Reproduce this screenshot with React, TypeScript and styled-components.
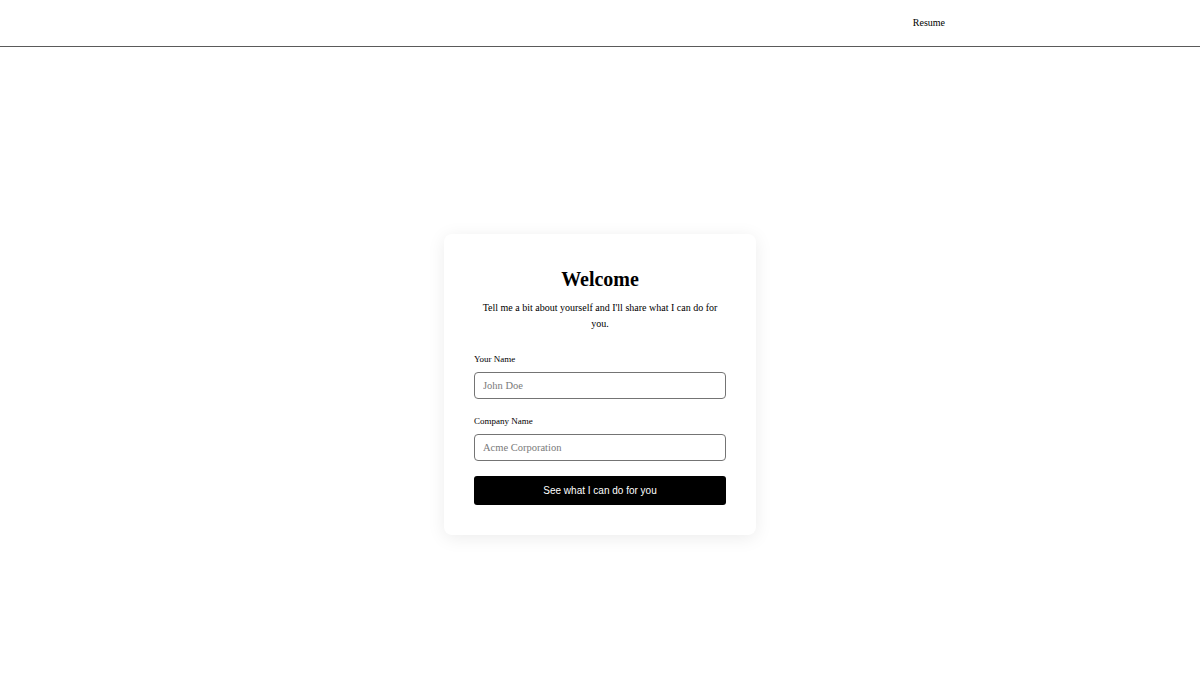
import React from "react";
import styled, { createGlobalStyle } from "styled-components";

const GlobalStyle = createGlobalStyle`
  * {
    box-sizing: border-box;
  }

  body {
    margin: 0;
    background: #ffffff;
    color: #000000;
    font-family: "Liberation Serif", "Times New Roman", serif;
  }
`;

const Header = styled.header`
  height: 47px;
  display: flex;
  align-items: center;
  justify-content: flex-end;
  padding: 0 255px 1px 0;
  border-bottom: 1px solid #5a5a5a;
`;

const NavLink = styled.a`
  font-size: 10px;
  color: #000000;
  text-decoration: none;
  cursor: pointer;
`;

const Main = styled.main`
  min-height: 100vh;
  display: flex;
  align-items: center;
  justify-content: center;
`;

const Card = styled.div`
  width: 312px;
  padding: 30px;
  background: #ffffff;
  border-radius: 8px;
  box-shadow: 0 3px 18px rgba(0, 0, 0, 0.08);
`;

const Title = styled.h1`
  margin: 0;
  font-size: 20px;
  line-height: 30px;
  font-weight: 700;
  text-align: center;
`;

const Subtitle = styled.p`
  margin: 6px 0 20px;
  font-size: 10px;
  line-height: 16px;
  text-align: center;
`;

const Form = styled.form`
  display: flex;
  flex-direction: column;
  gap: 15px;
`;

const Field = styled.div`
  display: flex;
  flex-direction: column;
  gap: 6px;
`;

const Label = styled.label`
  font-size: 9px;
  line-height: 14px;
`;

const Input = styled.input`
  height: 27px;
  width: 100%;
  padding: 0 8px;
  border: 1.5px solid #747474;
  border-radius: 4px;
  font-family: "Liberation Serif", "Times New Roman", serif;
  font-size: 10.5px;
  color: #000000;
  outline: none;

  &::placeholder {
    color: #7a7a7a;
  }
`;

const SubmitButton = styled.button`
  height: 29px;
  width: 100%;
  border: none;
  border-radius: 3px;
  background: #000000;
  color: #ffffff;
  font-family: "Liberation Sans", Arial, sans-serif;
  font-size: 10px;
  cursor: pointer;
`;

const fields = [
  { id: "name", label: "Your Name", placeholder: "John Doe" },
  { id: "company", label: "Company Name", placeholder: "Acme Corporation" },
];

function App() {
  return (
    <>
      <GlobalStyle />
      <Header>
        <NavLink>Resume</NavLink>
      </Header>
      <Main>
        <Card>
          <Title>Welcome</Title>
          <Subtitle>
            Tell me a bit about yourself and I'll share what I can do for you.
          </Subtitle>
          <Form onSubmit={(e) => e.preventDefault()}>
            {fields.map((field) => (
              <Field key={field.id}>
                <Label htmlFor={field.id}>{field.label}</Label>
                <Input id={field.id} type="text" placeholder={field.placeholder} />
              </Field>
            ))}
            <SubmitButton type="submit">See what I can do for you</SubmitButton>
          </Form>
        </Card>
      </Main>
    </>
  );
}

export default App;
